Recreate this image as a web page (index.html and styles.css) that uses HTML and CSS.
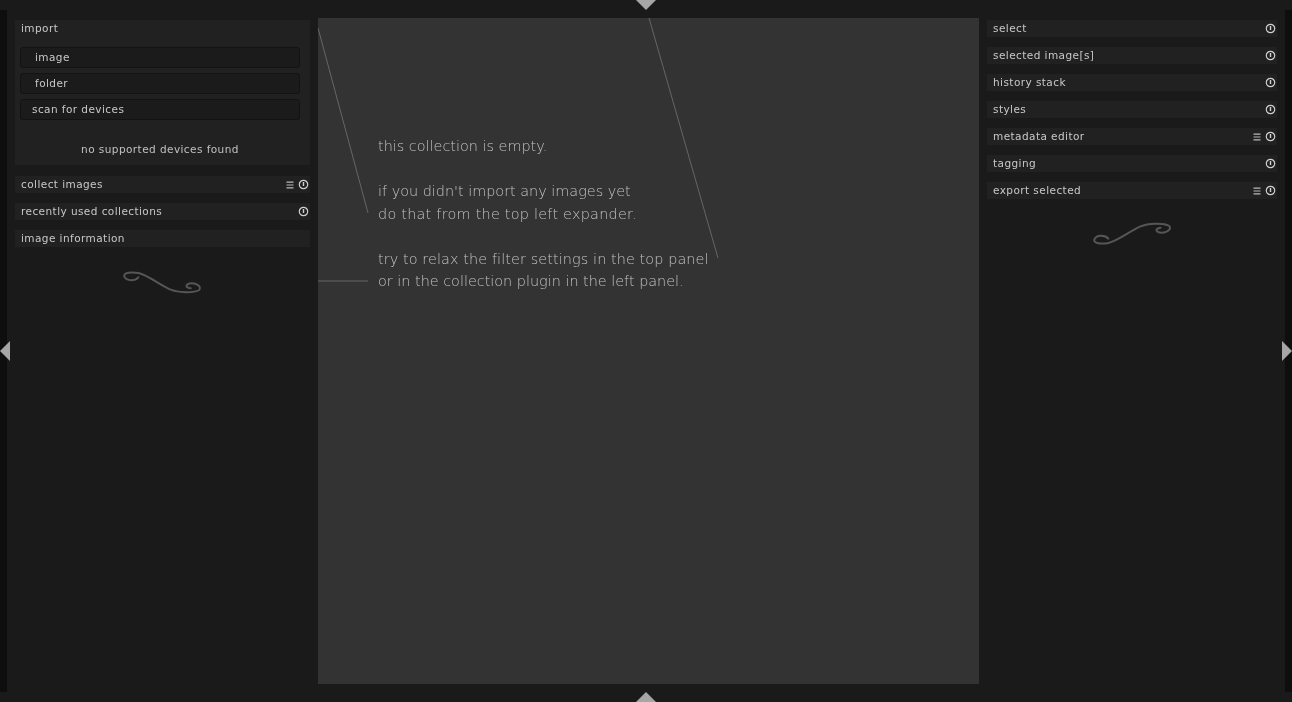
FILE: index.html
```html
<!DOCTYPE html>
<html lang="en">
  <head>
    <meta charset="UTF-8" />
    <title>lighttable</title>
    <link rel="stylesheet" href="styles.css">
  </head>
  <body>
    <svg width="0" height="0" class="defs">
      <symbol id="power" viewBox="0 0 11 11">
        <circle cx="5.5" cy="5.5" r="4.2" fill="none" stroke="currentColor" stroke-width="1.2" />
        <path d="M5.5 3v4" stroke="currentColor" stroke-width="1.4" />
      </symbol>
      <symbol id="presets" viewBox="0 0 8 8">
        <path d="M0.5 1.2h7M0.5 4h7M0.5 6.8h7" stroke="currentColor" stroke-width="1.2" />
      </symbol>
      <symbol id="flourish" viewBox="0 0 315 120">
        <path d="M85 52C75 64 50 64 43 50C38 38 65 35 85 39C115 46 145 72 180 88C205 98 250 100 268 90C278 76 248 64 232 73C226 79 232 84 242 85" fill="none" stroke="currentColor" stroke-width="6" stroke-linecap="round" />
      </symbol>
    </svg>

    <div class="app">
      <div class="edge"></div>

      <aside class="panel">
        <section class="module">
          <div class="moduleHead">import</div>
          <div class="moduleBody">
            <div class="button indent">image</div>
            <div class="button indent">folder</div>
            <div class="button">scan for devices</div>
            <p class="note">no supported devices found</p>
          </div>
        </section>
        <div class="row">
          <span>collect images</span>
          <svg class="presets"><use href="#presets" /></svg>
          <svg class="power"><use href="#power" /></svg>
        </div>
        <div class="row">
          <span>recently used collections</span>
          <svg class="power"><use href="#power" /></svg>
        </div>
        <div class="row"><span>image information</span></div>
        <svg class="flourish"><use href="#flourish" /></svg>
      </aside>

      <main class="center">
        <svg class="hints" width="661" height="666">
          <path d="M0 10L50 195M331 0L400 240M0 263H50" />
        </svg>
        <p class="empty">
          this collection is empty.<br /><br />
          if you didn't import any images yet<br />
          <span class="wide">do that from the top left expander.</span><br /><br />
          <span class="wider">try to relax the filter settings in the top panel</span><br />
          or in the collection plugin in the left panel.
        </p>
      </main>

      <aside class="panel right">
        <div class="row">
          <span>select</span>
          <svg class="power"><use href="#power" /></svg>
        </div>
        <div class="row">
          <span>selected image[s]</span>
          <svg class="power"><use href="#power" /></svg>
        </div>
        <div class="row">
          <span>history stack</span>
          <svg class="power"><use href="#power" /></svg>
        </div>
        <div class="row">
          <span>styles</span>
          <svg class="power"><use href="#power" /></svg>
        </div>
        <div class="row">
          <span>metadata editor</span>
          <svg class="presets"><use href="#presets" /></svg>
          <svg class="power"><use href="#power" /></svg>
        </div>
        <div class="row">
          <span>tagging</span>
          <svg class="power"><use href="#power" /></svg>
        </div>
        <div class="row">
          <span>export selected</span>
          <svg class="presets"><use href="#presets" /></svg>
          <svg class="power"><use href="#power" /></svg>
        </div>
        <svg class="flourish flip"><use href="#flourish" /></svg>
      </aside>

      <div class="edge"></div>
    </div>

    <svg class="arrow arrowTop" width="20" height="10"><path d="M0 0H20L10 10Z" /></svg>
    <svg class="arrow arrowBottom" width="20" height="10"><path d="M0 10H20L10 0Z" /></svg>
    <svg class="arrow arrowLeft" width="10" height="20"><path d="M10 0V20L0 10Z" /></svg>
    <svg class="arrow arrowRight" width="10" height="20"><path d="M0 0V20L10 10Z" /></svg>
  </body>
</html>
```

FILE: styles.css
```css
html,
body {
  margin: 0;
  padding: 0;
  width: 100%;
  height: 100%;
  overflow: hidden;
  background-color: #1a1a1a;
  font-family: 'DejaVu Sans', sans-serif;
  font-size: 10.5px;
  letter-spacing: 0.43px;
  color: #c8c8c8;
}

.defs {
  position: absolute;
}

.app {
  display: grid;
  grid-template-columns: 7px 311px 661px 306px 7px;
  height: 702px;
  will-change: transform;
}

.edge {
  margin: 10px 0;
  background-color: #0e0e0e;
}

.panel {
  display: flex;
  flex-direction: column;
  gap: 10px;
  padding: 20px 8px 0;
}

.module {
  background-color: #212121;
  height: 145px;
  margin-bottom: 1px;
}

.moduleHead {
  height: 17px;
  line-height: 17px;
  padding-left: 6px;
}

.moduleBody {
  display: flex;
  flex-direction: column;
  gap: 5px;
  padding: 10px 10px 0 5px;
}

.button {
  height: 21px;
  box-sizing: border-box;
  padding-left: 11px;
  background-color: #1b1b1b;
  border: 1px solid #131313;
  border-radius: 3px;
  line-height: 19px;
}

.indent {
  padding-left: 14px;
}

.note {
  margin: 16px 0 0;
  text-align: center;
  line-height: 17px;
  color: #c0c0c0;
}

.row {
  display: flex;
  align-items: center;
  gap: 5px;
  height: 17px;
  padding: 0 1px 0 6px;
  background-color: #212121;
}

.row span {
  flex: 1;
  height: 17px;
  line-height: 17px;
}

.power {
  width: 11px;
  height: 11px;
  color: #d0d0d0;
}

.presets {
  width: 8px;
  height: 8px;
  margin-right: -1px;
  color: #b8b8b8;
}

.flourish {
  width: 105px;
  height: 40px;
  align-self: center;
  margin-top: 3px;
  color: #565656;
}

.flip {
  transform: scaleY(-1);
  margin-top: 7px;
}

.center {
  position: relative;
  margin-top: 18px;
  height: 666px;
  background-color: #333333;
}

.hints {
  position: absolute;
  top: 0;
  left: 0;
}

.hints path {
  fill: none;
  stroke: #666666;
  stroke-width: 1;
}

.empty {
  margin: 0;
  padding: 117px 0 0 60px;
  font-size: 14.4px;
  font-weight: 200;
  letter-spacing: 0;
  line-height: 22.5px;
  color: #c2c2c2;
}

.wide {
  letter-spacing: 0.25px;
}

.wider {
  letter-spacing: 0.1px;
}

.arrow {
  position: absolute;
  fill: #a6a6a6;
}

.arrowTop {
  top: 0;
  left: 636px;
}

.arrowBottom {
  bottom: 0;
  left: 636px;
}

.arrowLeft {
  top: 341px;
  left: 0;
}

.arrowRight {
  top: 341px;
  right: 0;
}
```
